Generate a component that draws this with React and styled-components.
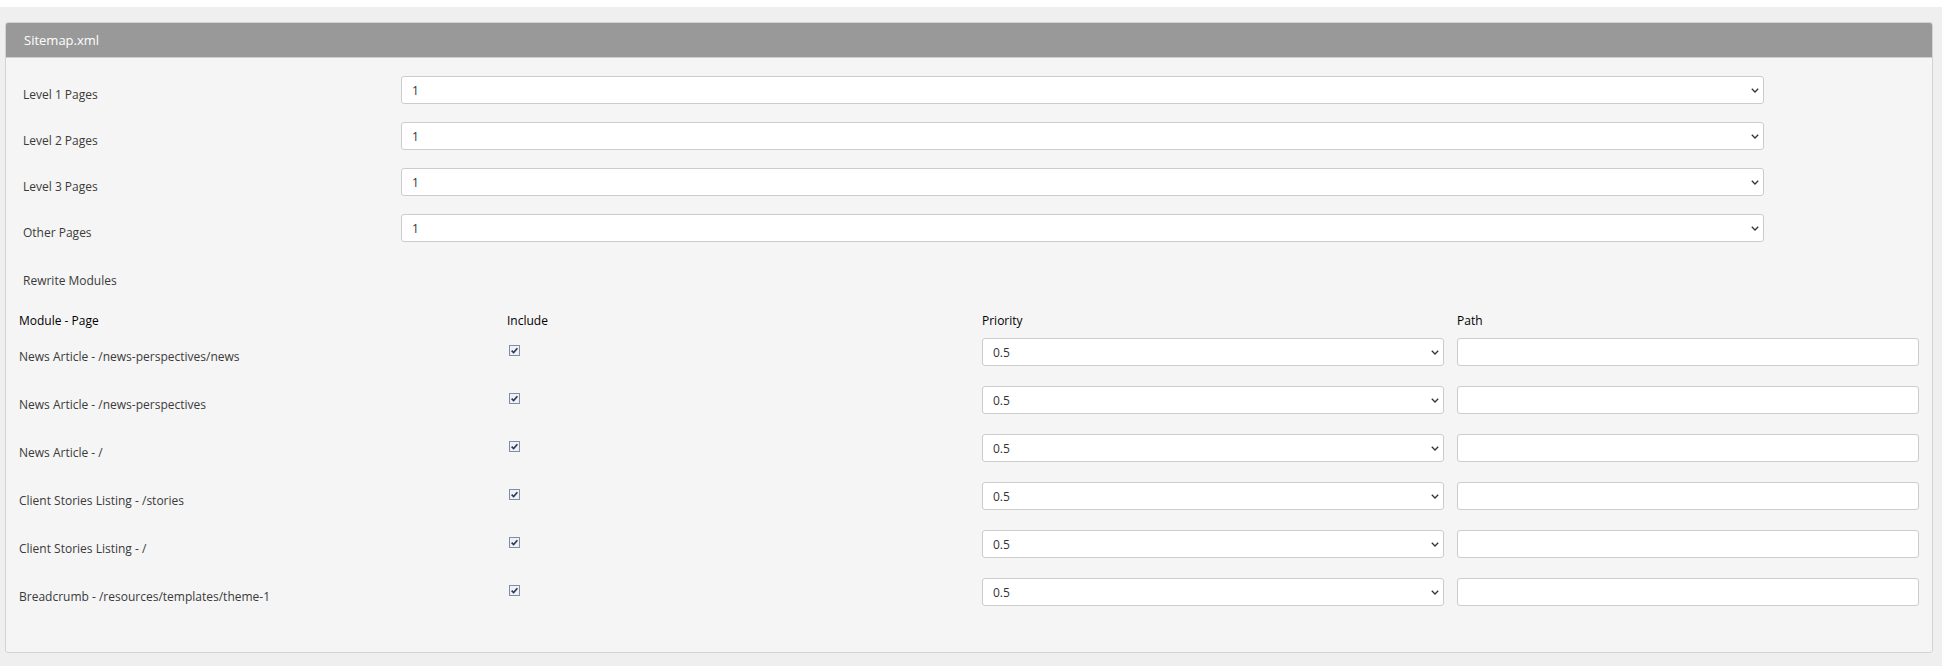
import React from "react";
import styled, { createGlobalStyle } from "styled-components";

const GlobalStyle = createGlobalStyle`
  html, body {
    margin: 0;
    padding: 0;
    background: #ffffff;
    font-family: "Open Sans", "Liberation Sans", Arial, sans-serif;
  }
`;

const levels = ["Level 1 Pages", "Level 2 Pages", "Level 3 Pages", "Other Pages"];

const modules = [
  "News Article - /news-perspectives/news",
  "News Article - /news-perspectives",
  "News Article - /",
  "Client Stories Listing - /stories",
  "Client Stories Listing - /",
  "Breadcrumb - /resources/templates/theme-1",
];

const Dropdown = ({ value, options, small }) => (
  <SelectWrap $small={small}>
    <Select defaultValue={value}>
      {options.map((o) => (
        <option key={o} value={o}>{o}</option>
      ))}
    </Select>
    <Chevron width="8" height="5" viewBox="0 0 8 5">
      <path d="M0.8 0.8 L4 4 L7.2 0.8" fill="none" stroke="#333" strokeWidth="1.3" />
    </Chevron>
  </SelectWrap>
);

export default function App() {
  return (
    <>
      <GlobalStyle />
      <Page>
        <Panel>
          <PanelHeader>Sitemap.xml</PanelHeader>
          <PanelBody>
            <LevelList>
              {levels.map((label) => (
                <FormRow key={label}>
                  <FieldLabel>{label}</FieldLabel>
                  <Dropdown value="1" options={["1", "0"]} />
                </FormRow>
              ))}
            </LevelList>

            <SectionTitle>Rewrite Modules</SectionTitle>

            <ModuleTable>
              <HeadCell>Module - Page</HeadCell>
              <HeadCell>Include</HeadCell>
              <HeadCell>Priority</HeadCell>
              <HeadCell>Path</HeadCell>

              {modules.map((name) => (
                <React.Fragment key={name}>
                  <ModuleName>{name}</ModuleName>
                  <CheckCell>
                    <CheckBox>
                      <svg width="9" height="9" viewBox="0 0 9 9">
                        <path d="M1.6 4.6 L3.6 6.6 L7.4 2.2" fill="none" stroke="#2b3a55" strokeWidth="1.6" />
                      </svg>
                    </CheckBox>
                  </CheckCell>
                  <Dropdown small value="0.5" options={["0.5", "1.0"]} />
                  <PathInput type="text" />
                </React.Fragment>
              ))}
            </ModuleTable>
          </PanelBody>
        </Panel>
      </Page>
    </>
  );
}

const Page = styled.div`
  margin-top: 7px;
  background: #efefef;
  padding: 15px 9px 13px 5px;
`;

const Panel = styled.div`
  background: #f5f5f5;
  border: 1px solid #d3d3d3;
  border-radius: 3px;
  overflow: hidden;
`;

const PanelHeader = styled.div`
  height: 34px;
  background: #999999;
  color: #ffffff;
  font-size: 13px;
  line-height: 34px;
  padding-left: 18px;
  border-bottom: 1px solid #cfcfcf;
`;

const PanelBody = styled.div`
  padding: 18px 12px 46px 12px;
`;

const LevelList = styled.div`
  display: flex;
  flex-direction: column;
  gap: 18px;
  padding-left: 5px;
`;

const FormRow = styled.div`
  display: grid;
  grid-template-columns: 378px 1363px;
  align-items: start;
`;

const FieldLabel = styled.div`
  font-size: 12px;
  color: #3a3a3a;
  line-height: 18px;
  padding-top: 10px;
`;

const SelectWrap = styled.div`
  position: relative;
  width: ${(p) => (p.$small ? "462px" : "100%")};
  height: 28px;
`;

const Select = styled.select`
  appearance: none;
  -webkit-appearance: none;
  display: block;
  height: 28px;
  width: 100%;
  box-sizing: border-box;
  background: #ffffff;
  border: 1px solid #cccccc;
  border-radius: 3px;
  padding: 0 24px 0 10px;
  font-family: "Open Sans", "Liberation Sans", Arial, sans-serif;
  font-size: 12px;
  color: #333;
  outline: none;
`;

const Chevron = styled.svg`
  position: absolute;
  right: 5px;
  top: 12px;
  pointer-events: none;
`;

const SectionTitle = styled.div`
  font-size: 12px;
  color: #3a3a3a;
  line-height: 18px;
  padding-left: 5px;
  margin-top: 30px;
`;

const ModuleTable = styled.div`
  display: grid;
  grid-template-columns: 488px 475px 475px 462px;
  row-gap: 20px;
  margin-top: 22px;
  padding-left: 1px;
  & > :nth-child(-n + 4) {
    margin-bottom: -12px;
  }
`;

const HeadCell = styled.div`
  font-size: 12px;
  font-weight: 500;
  color: #000;
  line-height: 18px;
`;

const ModuleName = styled.div`
  font-size: 12px;
  color: #3a3a3a;
  line-height: 18px;
  padding-top: 10px;
`;

const CheckCell = styled.div`
  padding-top: 7px;
`;

const CheckBox = styled.span`
  display: flex;
  align-items: center;
  justify-content: center;
  width: 11px;
  height: 11px;
  box-sizing: border-box;
  border: 1px solid #7f8ea6;
  background: #eef0f6;
  margin-left: 2px;
`;

const PathInput = styled.input`
  height: 28px;
  width: 462px;
  box-sizing: border-box;
  background: #ffffff;
  border: 1px solid #cccccc;
  border-radius: 3px;
  padding: 0 8px;
  font-family: "Open Sans", "Liberation Sans", Arial, sans-serif;
  font-size: 12px;
`;
